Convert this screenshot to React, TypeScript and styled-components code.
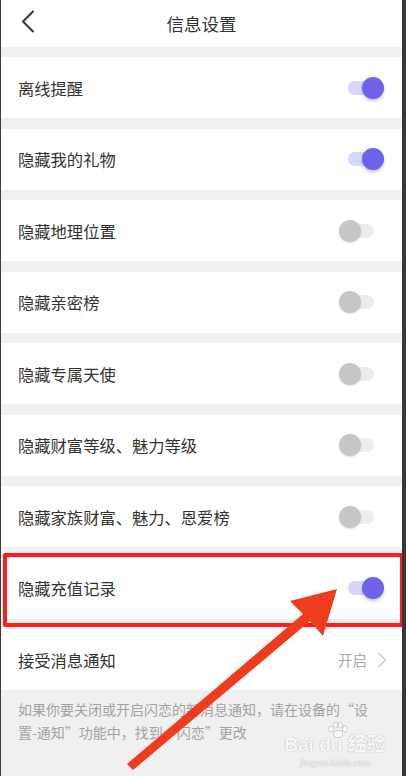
import React from 'react';
import styled, { createGlobalStyle } from 'styled-components';

const GlobalStyle = createGlobalStyle`
  html, body {
    margin: 0;
    padding: 0;
    background: #3a3a3a;
  }
  * {
    box-sizing: border-box;
  }
`;

const Page = styled.div`
  position: relative;
  width: 406px;
  height: 776px;
  overflow: hidden;
  background: #f0f0f0;
  border-left: 1px solid #3c3c3c;
  border-right: 4px solid #383838;
  font-family: "Noto Sans CJK SC", "Noto Sans", sans-serif;
  color: #333;
`;

const Header = styled.div`
  height: 47px;
  background: #fff;
  display: flex;
  align-items: center;
  justify-content: center;
  position: relative;
`;

const BackButton = styled.div`
  position: absolute;
  left: 19px;
  top: 10px;
  width: 16px;
  height: 23px;
  display: flex;
`;

const Title = styled.h1`
  margin: 0;
  font-size: 17.5px;
  font-weight: 400;
  color: #333;
`;

const List = styled.div`
  display: flex;
  flex-direction: column;
  gap: 10.5px;
  padding-top: 10px;
`;

const Row = styled.div<{ $marked?: boolean }>`
  position: relative;
  height: 61px;
  background: #fff;
  display: flex;
  align-items: center;
  justify-content: space-between;
  padding: 0 18px 0 17px;

  ${(p) =>
    p.$marked &&
    `
    &::after {
      content: '';
      position: absolute;
      left: 2px;
      right: -2px;
      top: -5px;
      bottom: -8px;
      border: 4.5px solid #ff1c1c;
      border-radius: 2px;
      pointer-events: none;
      z-index: 2;
    }
  `}
`;

const Label = styled.span`
  font-size: 16.3px;
  color: #333;
`;

const SwitchBox = styled.div`
  position: relative;
  width: 45px;
  height: 22px;
  flex-shrink: 0;
`;

const Track = styled.div<{ $on: boolean }>`
  position: absolute;
  left: 9px;
  top: 4px;
  width: 26px;
  height: 14px;
  border-radius: 7px;
  background: ${(p) => (p.$on ? '#d8d5fa' : '#ececec')};
`;

const Thumb = styled.div<{ $on: boolean }>`
  position: absolute;
  top: 0;
  left: ${(p) => (p.$on ? '23px' : '0')};
  width: 22px;
  height: 22px;
  border-radius: 50%;
  background: ${(p) => (p.$on ? '#6c63e9' : '#c6c6c6')};
  box-shadow: ${(p) =>
    p.$on ? '0 2px 3px rgba(60, 50, 160, 0.3)' : '0 1px 2px rgba(0, 0, 0, 0.12)'};
`;

const Value = styled.div`
  display: flex;
  align-items: center;
  gap: 10px;
  margin-right: -3px;
  font-size: 14.5px;
  color: #aaa;
`;

const Note = styled.p`
  margin: 0;
  padding: 8px 34px 0 17px;
  font-size: 14px;
  line-height: 23px;
  color: #a2a2a2;
`;

const ArrowLayer = styled.svg`
  position: absolute;
  left: 0;
  top: 0;
  width: 406px;
  height: 776px;
  pointer-events: none;
  z-index: 3;
`;

const Watermark = styled.div`
  position: absolute;
  left: 288px;
  top: 722px;
  width: 92px;
  display: flex;
  flex-direction: column;
  align-items: center;
  white-space: nowrap;
  color: rgba(255, 255, 255, 0.95);
  text-shadow: 0 0 1px rgba(110, 110, 110, 0.7);
  z-index: 4;
`;

const Paw = styled.svg`
  display: block;
  margin-left: 6px;
  margin-bottom: -5px;
`;

const MarkMain = styled.div`
  font-family: "Liberation Sans", "Noto Sans CJK SC", sans-serif;
  font-size: 19px;
  font-weight: 700;
  line-height: 24px;
`;

const MarkSub = styled.div`
  font-family: "Liberation Serif", serif;
  font-size: 9.5px;
  line-height: 12px;
  margin-top: 0;
`;

function Switch({ on }: { on: boolean }) {
  return (
    <SwitchBox>
      <Track $on={on} />
      <Thumb $on={on} />
    </SwitchBox>
  );
}

const items = [
  { label: '离线提醒', on: true },
  { label: '隐藏我的礼物', on: true },
  { label: '隐藏地理位置', on: false },
  { label: '隐藏亲密榜', on: false },
  { label: '隐藏专属天使', on: false },
  { label: '隐藏财富等级、魅力等级', on: false },
  { label: '隐藏家族财富、魅力、恩爱榜', on: false },
  { label: '隐藏充值记录', on: true, marked: true },
];

export default function App() {
  return (
    <>
      <GlobalStyle />
      <Page>
        <Header>
          <BackButton>
            <svg width="16" height="23" viewBox="0 0 16 23">
              <polyline
                points="13,1.5 3,11.5 13,21.5"
                fill="none"
                stroke="#333"
                strokeWidth="2"
                strokeLinecap="round"
                strokeLinejoin="round"
              />
            </svg>
          </BackButton>
          <Title>信息设置</Title>
        </Header>
        <List>
          {items.map((it) => (
            <Row key={it.label} $marked={it.marked}>
              <Label>{it.label}</Label>
              <Switch on={it.on} />
            </Row>
          ))}
          <div>
            <Row>
              <Label>接受消息通知</Label>
              <Value>
                开启
                <svg width="10" height="16" viewBox="0 0 10 16">
                  <polyline
                    points="1.5,1 8.5,8 1.5,15"
                    fill="none"
                    stroke="#c8c8c8"
                    strokeWidth="1.3"
                  />
                </svg>
              </Value>
            </Row>
            <Note>
              如果你要关闭或开启闪恋的新消息通知，请在设备的“设置-通知”功能中，找到“闪恋”更改
            </Note>
          </div>
        </List>
        <ArrowLayer viewBox="0 0 406 776">
          <polygon
            points="126,764 302,614 289,601 336,589 322,636 309,621 132,770"
            fill="#f03c1e"
          />
        </ArrowLayer>
        <Watermark>
          <Paw width="22" height="16" viewBox="0 0 22 16">
            <g fill="rgba(255,255,255,0.95)" stroke="rgba(120,120,120,0.6)" strokeWidth="0.6">
              <ellipse cx="4" cy="7" rx="2.4" ry="3" />
              <ellipse cx="8.5" cy="3" rx="2.4" ry="3" />
              <ellipse cx="13.5" cy="3" rx="2.4" ry="3" />
              <ellipse cx="18" cy="7" rx="2.4" ry="3" />
              <ellipse cx="11" cy="12" rx="4.5" ry="3.6" />
            </g>
          </Paw>
          <MarkMain>Bai du 经验</MarkMain>
          <MarkSub>jingyan.baidu.com</MarkSub>
        </Watermark>
      </Page>
    </>
  );
}
